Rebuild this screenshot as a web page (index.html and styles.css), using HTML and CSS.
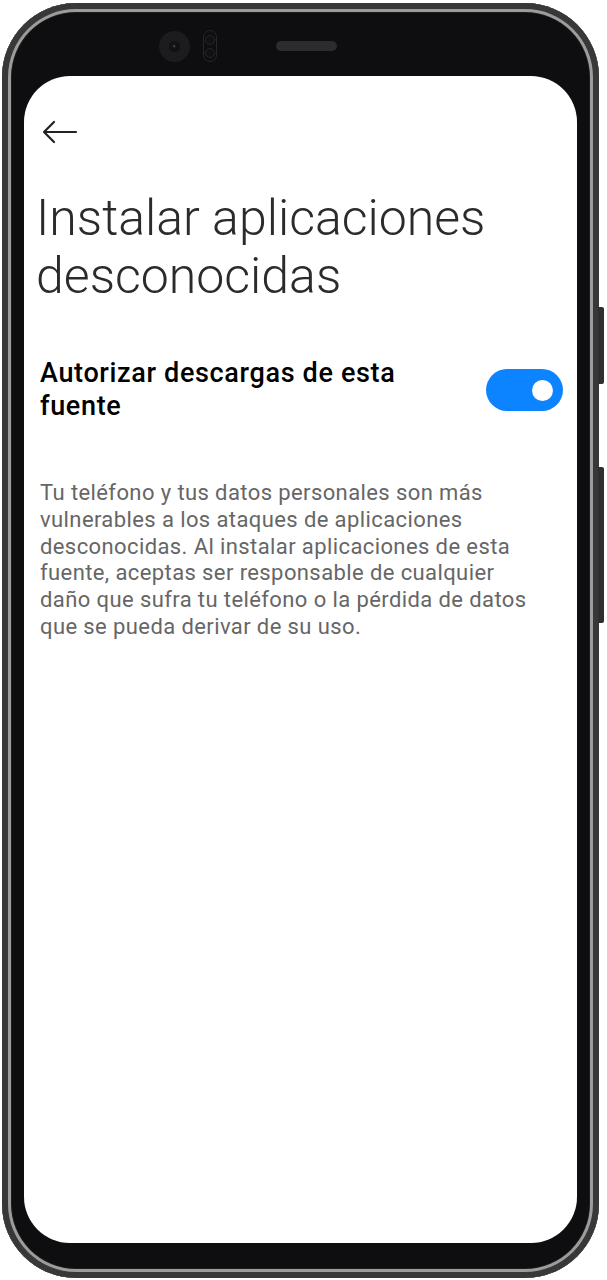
FILE: index.html
```html
<!DOCTYPE html>
<html lang="es">
<head>
<meta charset="utf-8">
<title>Instalar aplicaciones desconocidas</title>
<link rel="stylesheet" href="styles.css">
</head>
<body>
<div class="phone">
  <div class="btn btn-power"></div>
  <div class="btn btn-volume"></div>
  <div class="bezel-top">
    <div class="camera"><div class="lens"></div></div>
    <div class="sensor"><span></span><span></span></div>
    <div class="speaker"></div>
  </div>
  <div class="screen">
    <div class="appbar">
      <svg class="back" width="36" height="24" viewBox="0 0 36 24" aria-label="Atrás">
        <path d="M2 12 H34 M12 2 L2 12 L12 22" fill="none" stroke="#222" stroke-width="2.2" stroke-linecap="round" stroke-linejoin="round"/>
      </svg>
    </div>
    <h1 class="title">Instalar aplicaciones desconocidas</h1>
    <div class="setting">
      <div class="setting-label">Autorizar descargas de esta fuente</div>
      <div class="toggle"><div class="knob"></div></div>
    </div>
    <p class="desc">Tu teléfono y tus datos personales son más vulnerables a los ataques de aplicaciones desconocidas. Al instalar aplicaciones de esta fuente, aceptas ser responsable de cualquier daño que sufra tu teléfono o la pérdida de datos que se pueda derivar de su uso.</p>
  </div>
</div>
</body>
</html>
```

FILE: styles.css
```css
* { box-sizing: border-box; }
html, body { margin: 0; padding: 0; background: #fff; }
body { font-family: Roboto, "Noto Sans", Arial, sans-serif; }

.phone {
  position: relative;
  margin: 3px 0 0 2px;
  width: 597px;
  height: 1275px;
  border-radius: 74px;
  background: #0e0e10;
  box-shadow:
    inset 0 0 0 6px #383838,
    inset 0 0 0 9px #9c9c9c,
    inset 0 0 0 10px #1c1c1c;
  display: flex;
  flex-direction: column;
  padding: 0 22px 35px 22px;
}

.btn {
  position: absolute;
  right: -5px;
  width: 6px;
  background: #2f2f2f;
  border-radius: 0 2px 2px 0;
}
.btn-power { top: 304px; height: 77px; }
.btn-volume { top: 464px; height: 156px; }

.bezel-top {
  height: 73px;
  flex: none;
  display: flex;
  align-items: center;
  padding: 13px 0 0 135px;
}
.camera {
  width: 31px;
  height: 31px;
  border-radius: 50%;
  background: #1c1c1e;
  display: flex;
  align-items: center;
  justify-content: center;
}
.lens {
  width: 11px;
  height: 11px;
  border-radius: 50%;
  background: #0a0a0b;
  box-shadow: inset 0 0 0 4px #121214, inset 0 0 0 5px #232325;
  position: relative;
}
.lens::after {
  content: "";
  position: absolute;
  left: 4px;
  top: 4px;
  width: 2px;
  height: 2px;
  border-radius: 50%;
  background: #4a4a4c;
}
.sensor {
  margin-left: 13px;
  width: 14px;
  height: 32px;
  border-radius: 7px;
  border: 1px solid #262628;
  display: flex;
  flex-direction: column;
  align-items: center;
  justify-content: space-around;
  padding: 2px 0;
}
.sensor span {
  width: 10px;
  height: 10px;
  border-radius: 50%;
  border: 1px solid #262628;
  background: #111113;
}
.speaker {
  margin-left: 59px;
  width: 61px;
  height: 10px;
  border-radius: 5px;
  background: #2c2c2e;
}

.screen {
  flex: 1;
  background: #fff;
  border-radius: 46px;
  padding: 0 14px 0 16px;
  display: flex;
  flex-direction: column;
}

.appbar {
  height: 67px;
  display: flex;
  align-items: flex-end;
  padding-left: 2px;
}
.back { display: block; margin-bottom: -1px; }

.title {
  margin: 46px 0 0 -4px;
  font-weight: 300;
  font-size: 50px;
  line-height: 58px;
  color: #2b2b2b;
}

.setting {
  margin-top: 52px;
  display: flex;
  align-items: center;
  justify-content: space-between;
}
.setting-label {
  max-width: 400px;
  font-weight: 500;
  font-size: 27px;
  line-height: 33px;
  letter-spacing: 0.65px;
  color: #000;
}
.toggle {
  flex: none;
  width: 77px;
  height: 42px;
  border-radius: 21px;
  background: #0c84ff;
  display: flex;
  align-items: center;
  justify-content: flex-end;
  padding-right: 10px;
}
.knob {
  width: 21px;
  height: 21px;
  border-radius: 50%;
  background: #fff;
}

.desc {
  margin: 57px 16px 0 0;
  font-size: 22px;
  line-height: 26.8px;
  letter-spacing: 0.4px;
  color: #666;
}
```
